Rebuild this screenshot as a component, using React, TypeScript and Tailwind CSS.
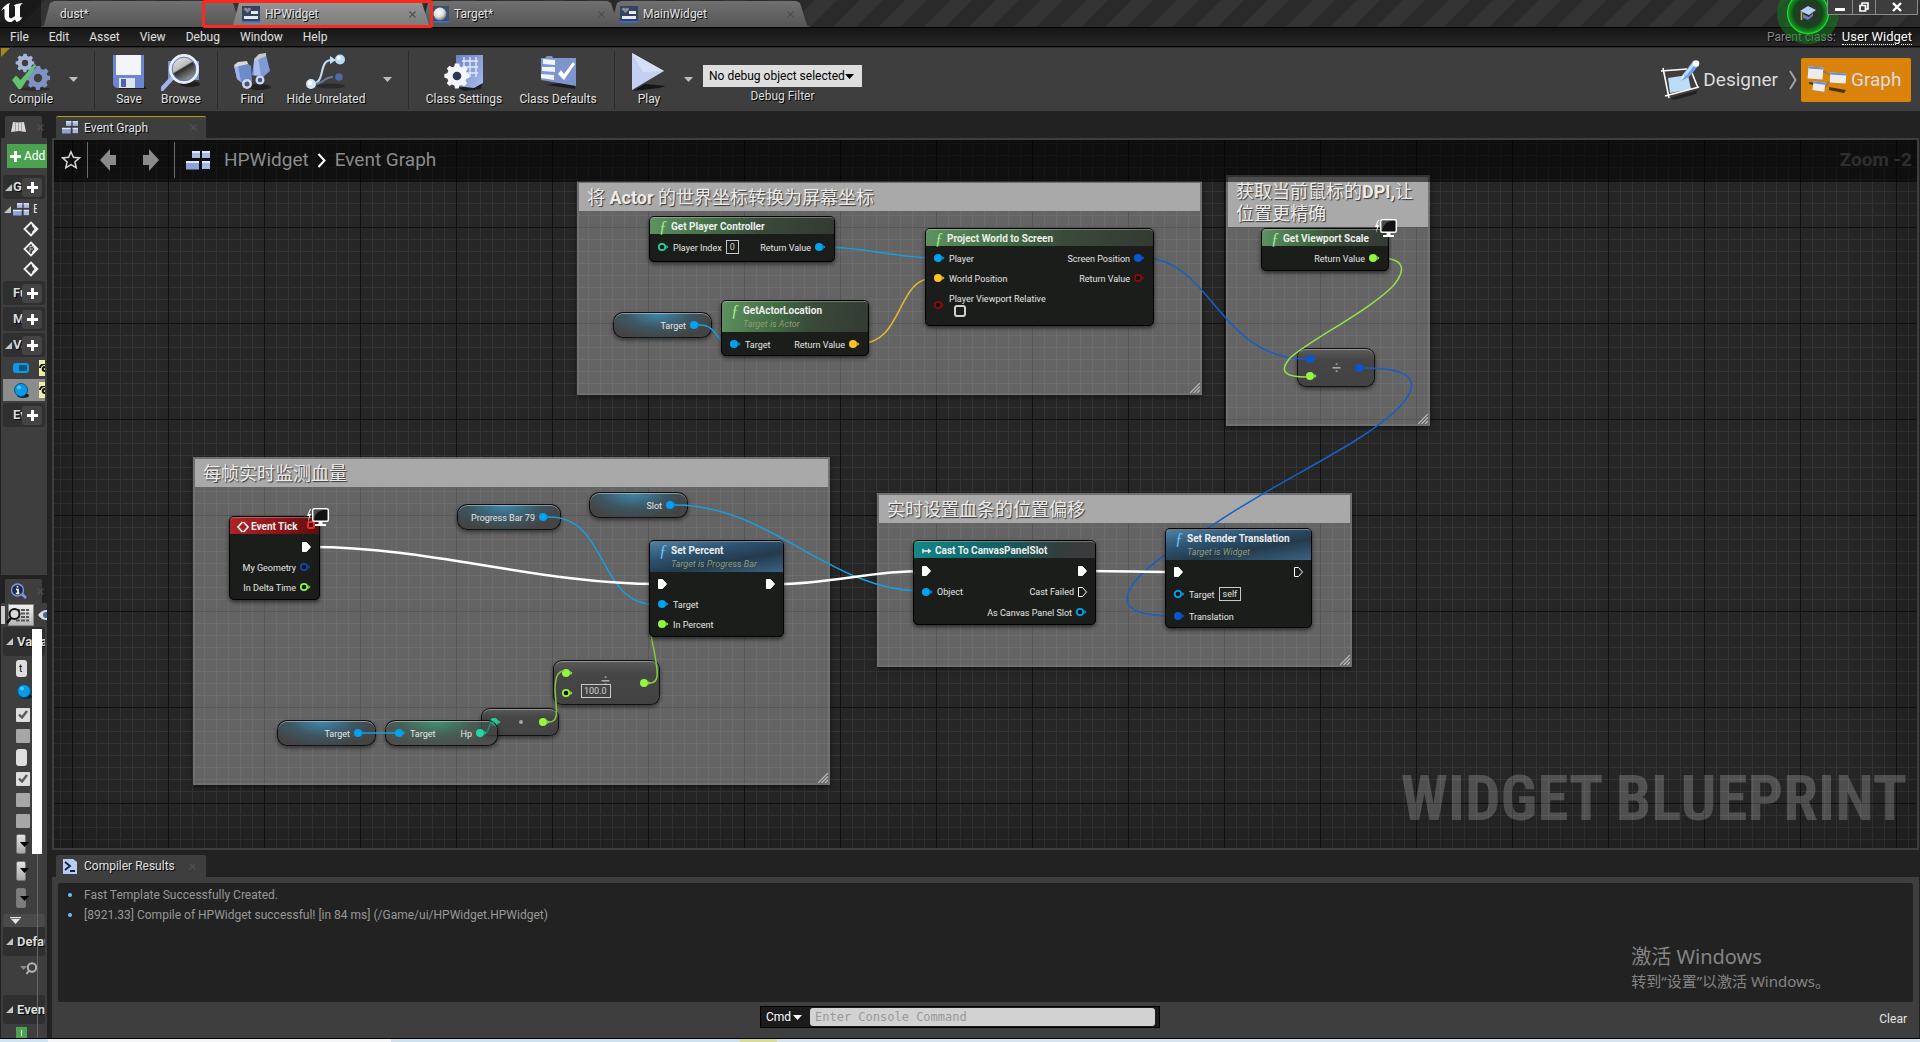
import React from "react";

const shadow = "[text-shadow:1px_1px_0_#000000]";

/* ---------- small drawings ---------- */

function Caret({ className = "" }: { className?: string }) {
  return (
    <svg width="9" height="5" viewBox="0 0 9 5" className={className} aria-hidden="true">
      <path d="M0 0H9L4.5 5Z" fill="currentColor" />
    </svg>
  );
}

function CloseX() {
  return (
    <svg width="7" height="7" viewBox="0 0 7 7" aria-hidden="true">
      <path d="M.5 .5 6.5 6.5M6.5 .5 .5 6.5" stroke="#505050" strokeWidth="1.1" />
    </svg>
  );
}

function Triangle() {
  return (
    <svg width="7" height="7" viewBox="0 0 7 7" className="shrink-0" aria-hidden="true">
      <path d="M7 0V7H0Z" fill="#c4c4c4" />
    </svg>
  );
}

function WidgetIcon() {
  return (
    <svg width="18" height="17" viewBox="0 0 18 17" aria-hidden="true">
      <rect width="18" height="15" fill="#34435f" />
      <rect y="15" width="18" height="1.5" fill="#2f6fe0" />
      <path d="M5.5 7 1.8 3.6C1.6 1.6 4.6 1 5.5 3 6.400 1 9.400 1.600 9 3.600Z" fill="#8d8d8d" />
      <rect x="9" y="5" width="7" height="3" fill="#e8e8e8" />
      <rect x="2" y="10" width="14" height="3" fill="#e8e8e8" />
    </svg>
  );
}

function SphereIcon() {
  return (
    <svg width="18" height="17" viewBox="0 0 18 17" aria-hidden="true">
      <defs>
        <radialGradient id="sphere" cx=".4" cy=".35" r=".65">
          <stop offset="0" stopColor="#ffffff" />
          <stop offset=".6" stopColor="#dcdcdc" />
          <stop offset="1" stopColor="#777777" />
        </radialGradient>
      </defs>
      <rect width="18" height="15" fill="#3d4f6e" />
      <rect y="15" width="18" height="1.500" fill="#2f6fe0" />
      <circle cx="9" cy="8" r="6.500" fill="url(#sphere)" />
    </svg>
  );
}

function GraphIcon({ w = 16, h = 13 }: { w?: number; h?: number }) {
  return (
    <svg width={w} height={h} viewBox="0 0 24 19" className="shrink-0" aria-hidden="true">
      <g fill="#a9b8e6">
        <rect x="6" y="0" width="8" height="7" />
        <rect x="16" y="0" width="8" height="7" />
        <rect x="0" y="10" width="13" height="8.500" fill="#8fa1da" />
        <rect x="16" y="10" width="8" height="8" />
      </g>
      <g fill="#dfe6fb">
        <rect x="6" y="0" width="8" height="2" />
        <rect x="16" y="0" width="8" height="2" />
        <rect x="0" y="10" width="13" height="2" />
        <rect x="16" y="10" width="8" height="2" />
      </g>
    </svg>
  );
}

const gearPath =
  "M-2-10H2L2.700-7.200 5-6.200 7.400-7.700 10-5 8.300-2.600 9-.8 11.500-.3V3.200L8.900 3.800 7.900 6 9.300 8.300 6.600 10.900 4.300 9.500 2.200 10.300 1.600 13H-1.800L-2.500 10.300-4.700 9.400-7 10.800-9.500 8.300-8.100 5.900-9 3.800-11.700 3.200V-.4L-9-1.100-8-3.200-9.400-5.500-6.900-8-4.600-6.500-2.500-7.300Z";

function Gear({ x, y, s, fill, hole }: { x: number; y: number; s: number; fill: string; hole: string }) {
  return (
    <g transform={`translate(${x} ${y}) scale(${s}) translate(0 -1.500)`}>
      <path d={gearPath} fill={fill} />
      <circle cx="0" cy="1.500" r="4" fill={hole} />
    </g>
  );
}

function CompileIcon() {
  return (
    <svg width="40" height="38" viewBox="0 0 40 38" aria-hidden="true">
      <ellipse cx="24" cy="36" rx="15" ry="1.800" fill="#222" opacity=".7" />
      <Gear x={14} y={10} s={0.8} fill="#a6b5da" hole="#3e3e3e" />
      <Gear x={27} y={25} s={1.05} fill="#8092c2" hole="#3e3e3e" />
      <path d="M1 27 5 22.500 9.500 27 24 10.500 25 13 10 36 7.500 36Z" fill="#62c370" />
    </svg>
  );
}

function SaveIcon() {
  return (
    <svg width="36" height="36" viewBox="0 0 36 36" aria-hidden="true">
      <path d="M6 32H33L36 35H8Z" fill="#1c1c1c" />
      <path d="M2 1H33V34H5L2 31Z" fill="#6c86cf" />
      <rect x="5" y="1" width="25" height="20" fill="#f4f5fa" />
      <rect x="8" y="24" width="16" height="10" fill="#dfe3ee" />
      <rect x="10" y="25" width="5" height="8" fill="#4a64ad" />
    </svg>
  );
}

function BrowseIcon() {
  return (
    <svg width="40" height="38" viewBox="0 0 40 38" aria-hidden="true">
      <defs>
        <linearGradient id="lens" x1="0" y1="0" x2=".6" y2="1">
          <stop offset="0" stopColor="#f5f5f5" />
          <stop offset=".5" stopColor="#bdbdbd" />
          <stop offset=".56" stopColor="#2d2d2d" />
          <stop offset="1" stopColor="#a0a0a0" />
        </linearGradient>
      </defs>
      <ellipse cx="29" cy="31" rx="10" ry="3" fill="#1d1d1d" />
      <path d="M7 8H38V27H7Z" fill="#7990cf" />
      <path d="M1 36 13 23" stroke="#9db3ea" strokeWidth="4.500" strokeLinecap="round" />
      <circle cx="23" cy="16" r="13.500" fill="url(#lens)" stroke="#e9eefb" strokeWidth="3" />
      <circle cx="23" cy="16" r="11.800" fill="none" stroke="#5f78b9" strokeWidth="1" />
    </svg>
  );
}

function FindIcon() {
  return (
    <svg width="40" height="38" viewBox="0 0 40 38" aria-hidden="true">
      <ellipse cx="27" cy="34" rx="12" ry="3" fill="#222" />
      <path d="M2 13 15 10 19 13 20 28 12 32 5 26Z" fill="#6f8acb" />
      <path d="M22 7 34 2 38 18 30 25 20 22Z" fill="#7f9ad8" />
      <path d="M22 7 26 4 29 22 22 22Z" fill="#a9bdea" />
      <path d="M2 13 6 12 9 29 5 26Z" fill="#9cb2e6" />
      <path d="M2 12 6 9 15 8 16 11 3 14Z" fill="#d8d8d8" />
      <path d="M22 6 27 1 34 0 34 3 23 8Z" fill="#c9c9c9" />
      <circle cx="15" cy="31" r="5" fill="#cfd6e8" />
      <circle cx="15" cy="31" r="2.500" fill="#45557f" />
      <circle cx="28" cy="27" r="4.500" fill="#cfd6e8" />
      <circle cx="28" cy="27" r="2.200" fill="#45557f" />
    </svg>
  );
}

function HideIcon() {
  return (
    <svg width="42" height="38" viewBox="0 0 42 38" aria-hidden="true">
      <ellipse cx="26" cy="33" rx="14" ry="2.500" fill="#2a2a2a" />
      <path d="M6 31C22 31 12 7 27 7" fill="none" stroke="#bfe0f7" strokeWidth="2" />
      <path d="M25 3 31 7 25 11Z" fill="#bfe0f7" />
      <path d="M8 31C20 31 18 24 28 24" fill="none" stroke="#65799b" strokeWidth="2" />
      <circle cx="35" cy="6.500" r="5" fill="#b9dcf8" />
      <circle cx="34" cy="5" r="2" fill="#fff" />
      <circle cx="34" cy="24" r="3.800" fill="#4c6aa8" />
      <circle cx="6" cy="31" r="5" fill="#cfe7fb" />
      <circle cx="5" cy="30" r="2.200" fill="#fff" />
    </svg>
  );
}

function SettingsIcon() {
  return (
    <svg width="40" height="38" viewBox="0 0 40 38" aria-hidden="true">
      <defs>
        <linearGradient id="doc" x1="0" y1="0" x2="1" y2="1">
          <stop offset="0" stopColor="#6d83c4" />
          <stop offset="1" stopColor="#a9bbec" />
        </linearGradient>
      </defs>
      <path d="M14 35 38 30 37 36 20 38Z" fill="#1d1d1d" />
      <path d="M12 2H39V30L30 35 12 33Z" fill="url(#doc)" />
      <path d="M18 8H34M18 14H34M20 4V18M26 4V24M32 4V24M22 20H34" stroke="#e4ebfc" strokeWidth="1.300" />
      <Gear x={13} y={23} s={1.08} fill="#f3f5fb" hole="#2b3850" />
    </svg>
  );
}

function DefaultsIcon() {
  return (
    <svg width="40" height="38" viewBox="0 0 40 38" aria-hidden="true">
      <path d="M8 32 38 28 37 36Z" fill="#1d1d1d" />
      <path d="M3 5H7L9 3H14L15 5H38V33L3 27Z" fill="#7e95cd" />
      <path d="M5 6 17 7V12L5 11ZM4 14 17 14V19L4 18ZM3 21 16 22V27L3 25Z" fill="#f2f4fa" />
      <path d="M20 21 23 17 26 21 35 9 37 11 26 27Z" fill="#fff" />
    </svg>
  );
}

function PlayIcon() {
  return (
    <svg width="36" height="40" viewBox="0 0 36 40" aria-hidden="true">
      <path d="M2 39 14 32 35 34 28 36Z" fill="#151515" />
      <path d="M1 1 33 19 1 38Z" fill="#c3d0f1" />
      <path d="M1 1 33 19 12 20Z" fill="#d5dff6" />
    </svg>
  );
}

function DesignerIcon() {
  return (
    <svg width="40" height="40" viewBox="0 0 40 40" aria-hidden="true">
      <path d="M10 38 38 30 36 34 14 40Z" fill="#222" />
      <path d="M8 18 28 15 31 29 10 33Z" fill="#bcdcf6" />
      <path d="M1 11 27 9M3 8 9 38M5 36 39 27M32 13 38 28" stroke="#fff" strokeWidth="1.600" fill="none" />
      <path d="M21 21 23 14 33 1 39 5 29 17Z" fill="#6fa2e6" />
      <path d="M21 21 23 14 25 16Z" fill="#fff" />
      <path d="M24 14 34 1.500 36 3 26 16Z" fill="#c5def9" />
      <circle cx="36" cy="3.500" r="3.300" fill="#fff" />
    </svg>
  );
}

function GraphModeIcon() {
  return (
    <svg width="40" height="28" viewBox="0 0 40 28" aria-hidden="true">
      <path d="M22 21 39 24 37 27 22 24ZM2 16 8 17 7 19 2 18Z" fill="#4a2f08" />
      <path d="M16 5 23 9M18 21 24 14" stroke="#777" strokeWidth="1.200" />
      <g transform="rotate(4 8 7)">
        <rect x="1" y="1" width="15" height="12" fill="#ececec" />
        <rect x="1" y="1" width="15" height="2" fill="#5f8fe0" />
      </g>
      <g transform="rotate(4 31 12)">
        <rect x="23" y="7" width="16" height="10" fill="#ececec" />
        <rect x="23" y="7" width="16" height="2" fill="#5f8fe0" />
      </g>
      <g transform="rotate(8 12 20)">
        <rect x="6" y="16" width="12" height="9" fill="#ececec" />
        <rect x="6" y="16" width="12" height="2" fill="#5f8fe0" />
      </g>
    </svg>
  );
}

function EyePatch() {
  return (
    <span className="flex h-4 w-[6px] shrink-0 items-center overflow-hidden bg-[#eeeea8]">
      <svg width="6" height="8" viewBox="0 0 6 8" aria-hidden="true">
        <path d="M6 0C3 0 1 2 1 4M6 3C3 3 3 7 6 7" stroke="#111" strokeWidth="2" fill="none" />
      </svg>
    </span>
  );
}

/* ---------- graph parts ---------- */

const BLUE = "#00a2f2";
const DEEP = "#0a56cf";
const LIME = "#93f73f";
const TEAL = "#1fd8a4";
const YELLOW = "#fdc324";
const RED = "#8c0a0a";

function Pin({ color, open = false }: { color: string; open?: boolean }) {
  return (
    <svg width="14" height="10" viewBox="0 0 14 10" className="shrink-0" aria-hidden="true">
      <circle cx="5" cy="5" r={open ? 3.2 : 4} fill={open ? "#111" : color} stroke={open ? color : "none"} strokeWidth="1.700" />
      <path d="M9.300 3 11.500 5 9.300 7Z" fill={color} />
    </svg>
  );
}

function Exec({ open = false, out = false }: { open?: boolean; out?: boolean }) {
  return (
    <svg width={out ? 12 : 14} height="12" viewBox={out ? "0 0 12 12" : "0 0 14 12"} className="shrink-0" aria-hidden="true">
      <path d="M1.500 1.500H5.500L9.500 6 5.500 10.500H1.500Z" fill={open ? "none" : "#fff"} stroke="#fff" strokeWidth="1" strokeLinejoin="round" />
    </svg>
  );
}

const label = "whitespace-nowrap pt-px text-[9px] leading-[12px] text-[#e6e6e6]";

function In({ pin, children }: { pin: React.ReactNode; children?: React.ReactNode }) {
  return (
    <div className="flex items-center gap-[2px]">
      {pin}
      <span className={label}>{children}</span>
    </div>
  );
}

function Out({ pin, children }: { pin: React.ReactNode; children?: React.ReactNode }) {
  return (
    <div className="ml-auto flex items-center gap-[3px]">
      <span className={label}>{children}</span>
      {pin}
    </div>
  );
}

function Row({ children, className = "h-5" }: { children: React.ReactNode; className?: string }) {
  return <div className={`flex items-center pl-[7px] pr-[6px] ${className}`}>{children}</div>;
}

const tints = {
  green: "bg-[linear-gradient(100deg,#5f9160_0%,#3f6a42_38%,#3a4a3a_60%,#333a33_100%)]",
  blue: "bg-[linear-gradient(170deg,#4f7fa3_0%,#2c5270_35%,#243a4c_62%,#3a6384_100%)]",
  teal: "bg-[linear-gradient(100deg,#15878a_0%,#126164_45%,#333c3c_80%,#3c3c3c_100%)]",
  red: "bg-[linear-gradient(100deg,#b02428_0%,#8c1518_55%,#591012_100%)]",
};

function Node({
  place,
  tint,
  icon,
  title,
  sub,
  corner,
  children,
}: {
  place: string;
  tint: keyof typeof tints;
  icon: React.ReactNode;
  title: string;
  sub?: string;
  corner?: React.ReactNode;
  children: React.ReactNode;
}) {
  return (
    <article className={`absolute rounded-[5px] border border-black bg-[#1b1d1b] shadow-[0_2px_4px_rgba(0,0,0,0.6)] ${place}`}>
      <header className={`flex gap-[3px] rounded-t-[4px] border-t border-white/30 pl-[8px] pt-px ${tints[tint]} ${sub ? "h-[31px]" : "h-[17px]"}`}>
        <span className="flex h-4 w-[10px] shrink-0 items-center justify-center">{icon}</span>
        <div>
          <h3 className="whitespace-nowrap text-[10px] font-bold leading-4 text-[#eeeeee]">{title}</h3>
          {sub && <p className="whitespace-nowrap text-[9px] italic leading-[11px] text-[#8f9a72]">{sub}</p>}
        </div>
      </header>
      {children}
      {corner}
    </article>
  );
}

function Fn({ className = "text-[#9ff08f]" }: { className?: string }) {
  return <i className={`font-['Liberation_Serif',serif] text-[16px] leading-none ${className}`}>ƒ</i>;
}

function Pill({
  place,
  glow = "bg-[radial-gradient(ellipse_at_45%_0%,#3f88ad_0%,#3d5560_45%,#444_75%)]",
  children,
}: {
  place: string;
  glow?: string;
  children: React.ReactNode;
}) {
  return (
    <div className={`absolute flex items-center rounded-[10px] border border-black/80 pl-[8px] pr-[8px] shadow-[inset_0_1px_0_rgba(255,255,255,0.4),0_2px_4px_rgba(0,0,0,0.5)] ${glow} ${place}`}>
      {children}
    </div>
  );
}

function Compact({ place, children }: { place: string; children: React.ReactNode }) {
  return (
    <div className={`absolute flex items-center rounded-[9px] border border-black/80 bg-[linear-gradient(#5a5a5a,#464646_30%,#424242)] pl-[7px] pr-[6px] shadow-[inset_0_1px_0_rgba(255,255,255,0.35),0_2px_4px_rgba(0,0,0,0.5)] ${place}`}>
      {children}
    </div>
  );
}

function Monitor({ place }: { place: string }) {
  return (
    <svg width="24" height="20" viewBox="0 0 24 20" className={`absolute ${place}`} aria-hidden="true">
      <path d="M4 2 1 9H3L2 15 5 7H3L5 2Z" fill="#fff" />
      <rect x="6.800" y="1.800" width="15.500" height="12.500" rx="1.500" fill="#111" stroke="#fff" strokeWidth="1.500" />
      <path d="M8 13C9 7 12 4 17 3H8Z" fill="#4a4a4a" />
      <path d="M12.500 15H16.500V17H20V19H9V17H12.500Z" fill="#fff" />
    </svg>
  );
}

function Comment({ place, head, children }: { place: string; head: string; children: React.ReactNode }) {
  return (
    <section className={`absolute border-2 border-[#7a7a7a]/50 bg-[#c3c3c3]/40 shadow-[0_2px_5px_rgba(0,0,0,0.5)] ${place}`}>
      <h2 className={`bg-[#a9a9a9] pl-[8px] text-[18px] font-normal leading-[22px] text-[#ececec] [text-shadow:1px_1px_1px_#333] ${head}`}>
        {children}
      </h2>
      <svg width="10" height="10" viewBox="0 0 10 10" className="absolute bottom-0 right-0" aria-hidden="true">
        <path d="M0 10 10 0M3.500 10 10 3.500M7 10 10 7" stroke="#bbb" strokeWidth="1.200" />
      </svg>
    </section>
  );
}

function Wires() {
  return (
    <svg className="pointer-events-none absolute inset-0 h-full w-full" aria-hidden="true">
      <g transform="translate(-54 -140)" fill="none" strokeWidth="1.500">
        <g stroke="#159fe0">
          <path d="M826 247C860 247 900 258 934 258" />
          <path d="M700 325C718 325 716 344 730 344" />
          <path d="M549 517C610 517 595 605 658 605" />
          <path d="M676 505C770 505 830 591 922 591" />
          <path d="M364 733H396" />
        </g>
        <g stroke="#1560c8">
          <path d="M1144 258C1210 258 1220 359 1306 359" />
          <path d="M1365 368C1410 368 1421 380 1404 402C1370 442 1280 478 1210 527C1160 555 1127 580 1127 600C1128 613 1150 616 1174 616" />
        </g>
        <path d="M858 344C905 344 895 278 934 278" stroke="#e9b828" />
        <path d="M1379 258C1403 258 1408 268 1393 286C1370 310 1310 340 1290 358C1278 372 1286 377 1306 377" stroke="#93e34a" />
        <g stroke="#84c93f">
          <path d="M650 683C661 683 657 668 654 650C650 634 650 626 658 625" />
          <path d="M549 722C560 722 556 708 555 690C555 678 558 671 564 671" />
        </g>
        <path d="M486 733C490 730 488 722 494 722" stroke="#1c8f70" />
        <g stroke="#ffffff" strokeWidth="2.500">
          <path d="M312 547C430 547 540 584 658 584" />
          <path d="M777 584C830 584 870 571 922 571" />
          <path d="M1089 571C1120 571 1145 572 1174 572" />
        </g>
      </g>
    </svg>
  );
}

function Canvas() {
  return (
    <main className="relative min-h-0 flex-1 overflow-hidden border-2 border-[#3e3e3e] bg-[#262626]">
      <div className="absolute inset-0 bg-[linear-gradient(90deg,#111_1px,transparent_1px),linear-gradient(#111_1px,transparent_1px),linear-gradient(90deg,#343434_1px,transparent_1px),linear-gradient(#343434_1px,transparent_1px)] bg-[size:96px_96px,96px_96px,12px_12px,12px_12px] bg-[position:18px_87px,18px_87px,6px_3px,6px_3px]" />
      <div className="absolute inset-0 shadow-[inset_0_0_60px_rgba(0,0,0,0.35)]" />
      <p className="absolute bottom-[17px] right-[10px] whitespace-nowrap font-['Roboto_Condensed',Roboto,sans-serif] text-[63px] font-bold leading-[64px] text-white/20">
        WIDGET BLUEPRINT
      </p>

      <Comment place="left-[523px] top-[41px] h-[214px] w-[625px]" head="h-7 pt-[4px]">
        将 <b>Actor</b> 的世界坐标转换为屏幕坐标
      </Comment>
      <Comment place="left-[1172px] top-[35px] h-[251px] w-[204px]" head="h-[50px] pt-[4px]">
        获取当前鼠标的<b>DPI,</b>让
        <br />
        位置更精确
      </Comment>
      <Comment place="left-[139px] top-[317px] h-[328px] w-[637px]" head="h-7 pt-[4px]">
        每帧实时监测血量
      </Comment>
      <Comment place="left-[823px] top-[353px] h-[174px] w-[475px]" head="h-7 pt-[4px]">
        实时设置血条的位置偏移
      </Comment>

      <Pill place="left-[559px] top-[172px] h-[26px] w-[99px]">
        <Out pin={<Pin color={BLUE} />}>Target</Out>
      </Pill>
      <Pill place="left-[403px] top-[364px] h-[26px] w-[104px]">
        <Out pin={<Pin color={BLUE} />}>Progress Bar 79</Out>
      </Pill>
      <Pill place="left-[535px] top-[352px] h-[26px] w-[99px]">
        <Out pin={<Pin color={BLUE} />}>Slot</Out>
      </Pill>
      <Pill place="left-[223px] top-[580px] h-[26px] w-[99px]">
        <Out pin={<Pin color={BLUE} />}>Target</Out>
      </Pill>
      <Compact place="left-[427px] top-[568px] h-[28px] w-[78px] justify-between">
        <Pin color={TEAL} />
        <span className="h-1 w-1 rounded-full bg-[#a5a5a5]" />
        <Pin color={LIME} />
      </Compact>
      <Pill
        place="left-[331px] top-[580px] h-[26px] w-[113px]"
        glow="bg-[radial-gradient(ellipse_at_45%_0%,rgba(62,150,115,0.9)_0%,rgba(64,90,80,0.8)_45%,rgba(68,68,68,0.7)_75%)]"
      >
        <In pin={<Pin color={BLUE} />}>Target</In>
        <Out pin={<Pin color={TEAL} />}>Hp</Out>
      </Pill>
      <Compact place="left-[1243px] top-[208px] h-[39px] w-[78px] justify-between">
        <div className="flex flex-col gap-[7px]">
          <Pin color={DEEP} />
          <Pin color={LIME} />
        </div>
        <span className="text-[16px] leading-4 text-[#a9a9a9]">÷</span>
        <Pin color={DEEP} />
      </Compact>
      <Compact place="left-[499px] top-[520px] h-[45px] w-[107px]">
        <div className="flex flex-col gap-[10px]">
          <Pin color={LIME} />
          <Pin color={LIME} open />
        </div>
        <div className="relative ml-[6px] flex h-full w-[54px] items-end pb-[6px]">
          <span className="absolute left-[20px] top-[12px] text-[16px] leading-4 text-[#a9a9a9]">÷</span>
          <input
            aria-label="Divisor"
            defaultValue="100.0"
            className="relative h-[14px] w-[30px] border border-[#c9c9c9] bg-transparent px-[2px] text-[9px] leading-none text-[#d0d0d0]"
          />
        </div>
        <span className="ml-auto">
          <Pin color={LIME} />
        </span>
      </Compact>

      <Wires />

      <Node place="left-[595px] top-[76px] h-[46px] w-[186px]" tint="green" icon={<Fn />} title="Get Player Controller">
        <Row className="h-[26px]">
          <In pin={<Pin color={TEAL} open />}>Player Index</In>
          <input
            aria-label="Player Index"
            defaultValue="0"
            className="ml-[4px] h-[14px] w-[13px] border border-[#c9c9c9] bg-transparent px-[3px] text-[9px] leading-none text-[#d0d0d0]"
          />
          <Out pin={<Pin color={BLUE} />}>Return Value</Out>
        </Row>
      </Node>
      <Node place="left-[871px] top-[88px] h-[98px] w-[229px]" tint="green" icon={<Fn />} title="Project World to Screen">
        <div className="pt-[2px]">
          <Row>
            <In pin={<Pin color={BLUE} />}>Player</In>
            <Out pin={<Pin color={DEEP} />}>Screen Position</Out>
          </Row>
          <Row>
            <In pin={<Pin color={YELLOW} />}>World Position</In>
            <Out pin={<Pin color={RED} open />}>Return Value</Out>
          </Row>
          <label className="flex items-center gap-[2px] pl-[7px] pt-[4px]">
            <Pin color={RED} open />
            <span className={label}>
              Player Viewport Relative
              <input type="checkbox" className="ml-[5px] block h-3 w-3 appearance-none rounded-[3px] border-2 border-[#d0d0d0]" />
            </span>
          </label>
        </div>
      </Node>
      <Node place="left-[667px] top-[160px] h-[56px] w-[148px]" tint="green" icon={<Fn />} title="GetActorLocation" sub="Target is Actor">
        <Row className="h-[24px]">
          <In pin={<Pin color={BLUE} />}>Target</In>
          <Out pin={<Pin color={YELLOW} />}>Return Value</Out>
        </Row>
      </Node>
      <Node
        place="left-[1207px] top-[88px] h-[43px] w-[128px]"
        tint="green"
        icon={<Fn />}
        title="Get Viewport Scale"
        corner={<Monitor place="-top-[11px] -right-[10px]" />}
      >
        <Row className="h-[24px]">
          <Out pin={<Pin color={LIME} />}>Return Value</Out>
        </Row>
      </Node>
      <Node
        place="left-[175px] top-[376px] h-[84px] w-[91px]"
        tint="red"
        icon={
          <svg width="12" height="12" viewBox="0 0 12 12" className="shrink-0" aria-hidden="true">
            <path d="M5.500 1 1 6 5.500 11M6.500 1 11 6 6.500 11" fill="none" stroke="#eee" strokeWidth="1.700" />
          </svg>
        }
        title="Event Tick"
        corner={
          <>
            <span className="absolute right-[4px] top-[4px] h-[8px] w-[8px] rounded-[2px] border-2 border-[#f02a2a] bg-[#3a0606]" />
            <Monitor place="-top-[10px] -right-[11px]" />
          </>
        }
      >
        <div className="pt-[3px]">
          <Row>
            <Out pin={<Exec out />} />
          </Row>
          <Row>
            <Out pin={<Pin color="#0b4bb0" open />}>My Geometry</Out>
          </Row>
          <Row>
            <Out pin={<Pin color={LIME} open />}>In Delta Time</Out>
          </Row>
        </div>
      </Node>
      <Node place="left-[595px] top-[400px] h-[97px] w-[135px]" tint="blue" icon={<Fn className="text-[#6cc3ff]" />} title="Set Percent" sub="Target is Progress Bar">
        <div className="pt-[2px]">
          <Row>
            <In pin={<Exec />} />
            <Out pin={<Exec out />} />
          </Row>
          <Row>
            <In pin={<Pin color={BLUE} />}>Target</In>
          </Row>
          <Row>
            <In pin={<Pin color={LIME} />}>In Percent</In>
          </Row>
        </div>
      </Node>
      <Node
        place="left-[859px] top-[400px] h-[85px] w-[183px]"
        tint="teal"
        icon={
          <svg width="11" height="8" viewBox="0 0 11 8" aria-hidden="true">
            <path d="M1 1.500V6.500M1 4H8" stroke="#eee" strokeWidth="1.500" />
            <path d="M6.500 1 10.500 4 6.500 7Z" fill="#eee" />
          </svg>
        }
        title="Cast To CanvasPanelSlot"
      >
        <div className="pt-[3px]">
          <Row>
            <In pin={<Exec />} />
            <Out pin={<Exec out />} />
          </Row>
          <Row className="h-[21px]">
            <In pin={<Pin color={BLUE} />}>Object</In>
            <Out pin={<Exec open out />}>Cast Failed</Out>
          </Row>
          <Row>
            <Out pin={<Pin color={BLUE} open />}>As Canvas Panel Slot</Out>
          </Row>
        </div>
      </Node>
      <Node place="left-[1111px] top-[388px] h-[100px] w-[147px]" tint="blue" icon={<Fn className="text-[#6cc3ff]" />} title="Set Render Translation" sub="Target is Widget">
        <Row className="h-[23px]">
          <In pin={<Exec />} />
          <Out pin={<Exec open out />} />
        </Row>
        <Row className="h-[22px]">
          <In pin={<Pin color={BLUE} open />}>Target</In>
          <button className="ml-[4px] h-[14px] border border-[#c9c9c9] px-[3px] text-[9px] leading-[12px] text-[#e0e0e0]">self</button>
        </Row>
        <Row className="h-[22px]">
          <In pin={<Pin color={DEEP} />}>Translation</In>
        </Row>
      </Node>

      <nav className="absolute inset-x-0 top-0 flex h-[42px] items-center bg-black/55 pb-[2px]" aria-label="Breadcrumb">
        <button aria-label="Bookmark" className="ml-[7px]">
          <svg width="20" height="20" viewBox="0 0 20 20" aria-hidden="true">
            <path d="M10 1.800 12.400 7.300 18.400 7.900 13.900 11.900 15.200 17.800 10 14.700 4.800 17.800 6.100 11.900 1.600 7.900 7.600 7.300Z" fill="none" stroke="#d8d8d8" strokeWidth="1.500" />
          </svg>
        </button>
        <span className="ml-[6px] h-9 w-px bg-[#6b6b6b]" />
        <button aria-label="Back" className="ml-3">
          <svg width="17" height="22" viewBox="0 0 17 22" aria-hidden="true">
            <path d="M0 11 10 0V6H16V16H10V22Z" fill="#8b8b8b" />
          </svg>
        </button>
        <button aria-label="Forward" className="ml-[25px]">
          <svg width="17" height="22" viewBox="0 0 17 22" aria-hidden="true">
            <path d="M17 11 7 0V6H1V16H7V22Z" fill="#8b8b8b" />
          </svg>
        </button>
        <span className="ml-[15px] h-9 w-px bg-[#6b6b6b]" />
        <span className="ml-[11px]">
          <GraphIcon w={24} h={19} />
        </span>
        <a href="#widget" className="ml-[14px] text-[19px] leading-6 text-[#8c8c8c]">
          HPWidget
        </a>
        <svg width="9" height="15" viewBox="0 0 9 15" className="ml-2" aria-hidden="true">
          <path d="M1.500 1 7.500 7.500 1.500 14" fill="none" stroke="#fff" strokeWidth="2" />
        </svg>
        <a href="#event-graph" className="ml-[9px] text-[19px] leading-6 text-[#8c8c8c]">
          Event Graph
        </a>
        <span className="ml-auto mr-[5px] text-[19px] font-bold leading-6 text-[#2f2f2f]">Zoom -2</span>
      </nav>
    </main>
  );
}

/* ---------- window chrome ---------- */

function WindowTab({ title, icon, active = false, closable = true }: { title: string; icon?: React.ReactNode; active?: boolean; closable?: boolean }) {
  return (
    <div
      className={`-mr-[13px] flex h-[26px] w-[202px] items-center [clip-path:polygon(0_100%,3px_92%,9px_8%,13px_0,188px_0,192px_8%,199px_92%,202px_100%)] ${
        active ? "relative z-10 bg-[linear-gradient(#969696,#7a7a7a)]" : "bg-[linear-gradient(#707070,#565656)]"
      } ${icon ? "pl-3" : "pl-[19px]"}`}
    >
      {icon}
      <span className={`text-[12px] leading-4 text-[#e3e3e3] ${shadow} ${icon ? "ml-[5px]" : ""}`}>{title}</span>
      {closable && (
        <button aria-label={`Close ${title}`} className="ml-auto mr-[16px]">
          <CloseX />
        </button>
      )}
    </div>
  );
}

function TitleBar() {
  return (
    <header className="relative flex h-7 items-end border-b border-black bg-[repeating-linear-gradient(135deg,#333_0px,#333_16px,#2a2a2a_16px,#2a2a2a_32px)]">
      <div className="flex h-full w-[41px] items-start bg-black/40 pl-[1px] pt-[2px]">
        <svg width="23" height="21" viewBox="0 0 23 21" aria-hidden="true">
          <path
            d="M0 9C2 5 5 2 9 1L8 3.500V14C8 16 9.500 16.500 11 16L14 14V5C14 4 13.500 3.500 12.500 3.500 14 2.500 17 1.500 22 1 20 2.500 19 3.500 19 5V14C19 15.500 20 16 21.500 15 20 18 18 19.500 15.500 20L14 17.500 10.500 20C6 20 3.500 18 3.500 14V7.500C3.500 6.500 2 6.500 0 9Z"
            fill="#fff"
          />
        </svg>
      </div>
      <WindowTab title="dust*" closable={false} />
      <WindowTab title="HPWidget" icon={<WidgetIcon />} active />
      <WindowTab title="Target*" icon={<SphereIcon />} />
      <WindowTab title="MainWidget" icon={<WidgetIcon />} />
      <div className="pointer-events-none absolute left-[202px] top-0 z-20 h-7 w-[231px] rounded-[3px] border-[3px] border-[#fb2a1c]" />
      <svg width="64" height="45" viewBox="0 0 64 45" className="pointer-events-none absolute right-[80px] top-0 z-20" aria-hidden="true">
        <defs>
          <radialGradient id="ring" cx=".5" cy=".5" r=".5">
            <stop offset=".3" stopColor="#2b332b" />
            <stop offset=".7" stopColor="#15461a" />
            <stop offset="1" stopColor="#12a522" />
          </radialGradient>
        </defs>
        <circle cx="32" cy="13" r="31" fill="#14821e" opacity=".5" />
        <circle cx="32" cy="13" r="20.500" fill="url(#ring)" stroke="#1fd832" strokeWidth="1.200" />
        <path d="M24 11 32 6 40 10 33 15Z" fill="#b4cdf0" />
        <path d="M27 14 33 17 37 13V16L32 20 27 18Z" fill="#5f7fb5" />
        <path d="M25.500 12V20" stroke="#d8b070" strokeWidth="1.500" />
      </svg>
      <div className="relative z-30 ml-auto mr-[2px] flex h-[15px] self-start border border-t-0 border-[#8a8a8a] bg-[#3d3d3d]">
        <button aria-label="Minimize" className="flex w-[25px] items-center justify-center border-r border-[#8a8a8a]">
          <span className="mt-[4px] h-[3px] w-[10px] bg-white" />
        </button>
        <button aria-label="Restore" className="flex w-[23px] items-center justify-center border-r border-[#8a8a8a]">
          <svg width="10" height="10" viewBox="0 0 10 10" aria-hidden="true">
            <path d="M3 3V1H9V7H7M1 3.500H6.500V9H1Z" fill="none" stroke="#fff" strokeWidth="1.700" />
          </svg>
        </button>
        <button aria-label="Close" className="flex w-[41px] items-center justify-center">
          <svg width="10" height="10" viewBox="0 0 10 10" aria-hidden="true">
            <path d="M1 1 9 9M9 1 1 9" stroke="#fff" strokeWidth="2.400" />
          </svg>
        </button>
      </div>
    </header>
  );
}

function MenuBar() {
  return (
    <nav className={`flex h-[19px] items-center border-b border-black bg-[linear-gradient(#161616,#262626)] pl-[10px] text-[12px] leading-4 text-[#e0e0e0] ${shadow}`}>
      <div className="flex gap-[20px]">
        {["File", "Edit", "Asset", "View", "Debug", "Window", "Help"].map((m) => (
          <button key={m}>{m}</button>
        ))}
      </div>
      <span className="ml-auto mr-[6px] text-[12px] text-[#8a8a8a]">Parent class:</span>
      <a href="#user-widget" className="relative z-30 mr-2 border-b border-dotted border-white text-[13px] leading-[15px] text-white">
        User Widget
      </a>
    </nav>
  );
}

function Tool({ label: text, icon, width }: { label: string; icon: React.ReactNode; width: string }) {
  return (
    <button className={`flex h-full flex-col items-center pt-1 ${width}`}>
      <span className="flex h-[39px] items-center">{icon}</span>
      <span className={`whitespace-nowrap text-[12px] leading-4 text-[#e3e3e3] ${shadow}`}>{text}</span>
    </button>
  );
}

function DropArrow({ label: text }: { label: string }) {
  return (
    <button aria-label={text} className="flex h-full w-[22px] items-center justify-center text-[#bdbdbd]">
      <Caret />
    </button>
  );
}

function Sep({ className = "" }: { className?: string }) {
  return <span className={`h-[58px] w-px self-center bg-[#2b2b2b] ${className}`} />;
}

function Toolbar() {
  return (
    <div className="flex h-16 items-stretch border-t border-[#2a2a2a] bg-[#3e3e3e]">
      <div className="relative flex">
        <svg width="9" height="9" viewBox="0 0 9 9" className="absolute left-px top-0" aria-hidden="true">
          <path d="M0 0H9L0 9Z" fill="#a8841e" />
        </svg>
        <Tool label="Compile" icon={<CompileIcon />} width="w-[62px]" />
        <DropArrow label="Compile options" />
      </div>
      <Sep className="ml-[10px] mr-[11px]" />
      <Tool label="Save" icon={<SaveIcon />} width="w-[46px]" />
      <Tool label="Browse" icon={<BrowseIcon />} width="ml-[5px] w-[48px]" />
      <Sep className="ml-3 mr-[10px]" />
      <Tool label="Find" icon={<FindIcon />} width="w-[48px]" />
      <Tool label="Hide Unrelated" icon={<HideIcon />} width="ml-[4px] w-[92px]" />
      <span className="ml-[4px]">
        <DropArrow label="Hide Unrelated options" />
      </span>
      <Sep className="ml-[10px] mr-[9px]" />
      <Tool label="Class Settings" icon={<SettingsIcon />} width="w-[92px]" />
      <Tool label="Class Defaults" icon={<DefaultsIcon />} width="ml-[2px] w-[92px]" />
      <Sep className="ml-[10px] mr-[7px]" />
      <Tool label="Play" icon={<PlayIcon />} width="w-[54px]" />
      <span className="ml-px">
        <DropArrow label="Play options" />
      </span>
      <label className="ml-[4px] flex flex-col items-center gap-px pt-[17px] text-[12px] leading-4 text-[#dcdcdc]">
        <span className="relative block">
          <select className="block h-[22px] w-[159px] appearance-none bg-[#dedede] pl-[6px] text-[12px] text-black" defaultValue="none">
            <option value="none">No debug object selected</option>
          </select>
          <Caret className="pointer-events-none absolute right-2 top-[9px] text-black" />
        </span>
        <span className={shadow}>Debug Filter</span>
      </label>
      <div className="ml-auto mr-[9px] flex items-center self-center text-[19px] leading-6 text-[#dcdcdc]">
        <button className="flex items-center gap-[3px]">
          <DesignerIcon />
          Designer
        </button>
        <svg width="8" height="20" viewBox="0 0 8 20" className="mx-[11px] mr-[4px]" aria-hidden="true">
          <path d="M1 1 6.500 10 1 19" fill="none" stroke="#a8a8a8" strokeWidth="1.800" />
        </svg>
        <button className="flex h-11 w-[110px] items-center gap-1 rounded-[2px] bg-[#d9820c] pl-[6px]">
          <GraphModeIcon />
          Graph
        </button>
      </div>
    </div>
  );
}

/* ---------- left column ---------- */

const barBg = "bg-[#2f2f2f] rounded-[3px]";

function Section({ title, open = false, className = "" }: { title: string; open?: boolean; className?: string }) {
  return (
    <div className={`flex items-center overflow-hidden ${barBg} ${className}`}>
      <span className="flex w-[10px] shrink-0 justify-center">{open && <Triangle />}</span>
      <span className={`w-[9px] shrink-0 overflow-hidden whitespace-nowrap text-[13px] font-bold leading-5 text-[#dadada] ${shadow}`}>{title}</span>
      <button aria-label={`Add ${title}`} className="flex h-[19px] w-5 shrink-0 items-center justify-center rounded-[3px] bg-[#444]">
        <svg width="11" height="11" viewBox="0 0 11 11" aria-hidden="true">
          <path d="M5.500 0V11M0 5.500H11" stroke="#fff" strokeWidth="3" />
        </svg>
      </button>
    </div>
  );
}

function Diamond({ f = false }: { f?: boolean }) {
  return (
    <div className="flex h-5 items-center pl-[20px]">
      <svg width="16" height="16" viewBox="0 0 16 16" aria-hidden="true">
        <path d="M8 1.500 14.500 8 8 14.500 1.500 8Z" fill="none" stroke="#f0f0f0" strokeWidth="1.800" />
        <path d="M9 2.500 14 8 9 13.500V11L11.500 8 9 5Z" fill="#f0f0f0" />
        {f && <path d="M7 5V11M7 5.500H11M7 8H10" stroke="#aaa" strokeWidth="1.200" />}
      </svg>
    </div>
  );
}

function Ball() {
  return (
    <svg width="15" height="15" viewBox="0 0 15 15" className="shrink-0" aria-hidden="true">
      <ellipse cx="9" cy="12.500" rx="6" ry="2.500" fill="#0a2233" />
      <circle cx="7" cy="7" r="6.500" fill="#079be8" stroke="#06517a" strokeWidth="1" />
      <circle cx="5" cy="4.500" r="2" fill="#4cc3ff" />
    </svg>
  );
}

function BlueprintPanel() {
  return (
    <section aria-label="My Blueprint" className="flex w-[47px] flex-col overflow-hidden pl-px">
      <div className="ml-1 flex h-[22px] w-[37px] shrink-0 items-center justify-between rounded-t-[2px] bg-[#3e3e3e] pl-[6px]">
        <svg width="15" height="13" viewBox="0 0 15 13" aria-hidden="true">
          <path d="M2 1 7 1.500 13 1 15 11 8 10 0 11Z" fill="#d9d9d9" />
          <path d="M4.500 1.200V10M7.500 1.500V10M10.500 1.200V10" stroke="#a2a2a2" />
        </svg>
        <span className="-mr-[2px]">
          <CloseX />
        </span>
      </div>
      <div className="h-[437px] w-[46px] overflow-hidden bg-[#3e3e3e] pl-[2px] pt-[6px]">
        <button className="ml-[4px] flex h-6 w-[40px] items-center gap-[3px] overflow-hidden bg-[#4ba350] pl-[3px] text-[12px] leading-4 text-white">
          <svg width="11" height="11" viewBox="0 0 11 11" className="shrink-0" aria-hidden="true">
            <path d="M5.500 0V11M0 5.500H11" stroke="#fff" strokeWidth="3" />
          </svg>
          Add
        </button>
        <Section title="Graphs" open className="mt-[7px] h-6 w-[42px]" />
        <div className="flex h-5 items-center gap-[2px] overflow-hidden pl-[1px] text-[12px] text-[#ddd]">
          <Triangle />
          <GraphIcon />
          <span className="ml-[2px] w-[4px] overflow-hidden">E</span>
        </div>
        <Diamond />
        <Diamond f />
        <Diamond />
        <Section title="Functions" className="mt-[2px] h-6 w-[42px]" />
        <Section title="Macros" className="mt-[2px] h-6 w-[42px]" />
        <Section title="Variables" open className="mt-[2px] h-6 w-[42px]" />
        <div className="flex h-[22px] w-[42px] items-center justify-between pl-[10px]">
          <span className="h-[10px] w-4 rounded-[3px] border-2 border-l-[6px] border-[#0d98e0] bg-[#0b5580]" />
          <EyePatch />
        </div>
        <div className="flex h-[22px] w-[42px] items-center justify-between bg-[#8c8c8c] pl-[11px]">
          <Ball />
          <EyePatch />
        </div>
        <Section title="Event" className="mt-[2px] h-6 w-[42px]" />
      </div>
    </section>
  );
}

function Check({ on = false, name }: { on?: boolean; name: string }) {
  return (
    <label className="relative flex h-[21px] items-center pl-[15px]">
      <input aria-label={name} type="checkbox" defaultChecked={on} className="h-[14px] w-[14px] appearance-none rounded-[1px] bg-[#a6a6a6] checked:bg-[#dedede]" />
      {on && (
        <svg width="10" height="9" viewBox="0 0 10 9" className="absolute left-[17px] top-[6px]" aria-hidden="true">
          <path d="M1 4.500 4 7.500 9 1" fill="none" stroke="#5a5a5a" strokeWidth="2.400" />
        </svg>
      )}
    </label>
  );
}

function Combo({ tone, className, name }: { tone: string; className: string; name: string }) {
  return (
    <div className={`flex items-center ${className}`}>
      <button aria-label={name} className={`flex h-5 w-[10px] items-center rounded-[2px] border border-[#777] pl-[3px] ${tone}`}>
        <Caret className="shrink-0 text-black" />
      </button>
    </div>
  );
}

function DetailsPanel() {
  return (
    <section aria-label="Details" className="mt-[4px] flex min-h-0 w-[47px] flex-1 flex-col overflow-hidden pl-px">
      <div className="ml-1 flex h-[24px] w-[37px] shrink-0 items-center justify-between rounded-t-[2px] bg-[#3e3e3e] pl-[5px]">
        <svg width="17" height="16" viewBox="0 0 17 16" aria-hidden="true">
          <path d="M11 10 16 15" stroke="#7f9be8" strokeWidth="2.500" />
          <circle cx="7.500" cy="7" r="6" fill="#1e2a48" stroke="#7f9be8" strokeWidth="1.300" />
          <path d="M7.500 3V4.600M6 6.500H8V10.500M5.700 10.500H9.500" stroke="#fff" strokeWidth="1.700" />
        </svg>
        <span className="-mr-[2px]">
          <CloseX />
        </span>
      </div>
      <div className="relative min-h-0 w-[46px] flex-1 overflow-hidden bg-[#3e3e3e]">
        <div className="flex h-[24px] items-center">
          <span className="h-[18px] w-1 bg-[#ccc]" />
          <button aria-label="Property matrix" className="relative ml-[3px] flex h-[22px] w-[26px] items-center border border-[#888] bg-[linear-gradient(#f0f0f0,#b5b5b5)]">
            <svg width="28" height="18" viewBox="0 0 28 18" className="absolute -left-[3px]" aria-hidden="true">
              <path d="M10 4H23M10 7.500H23M10 11H23M10 14.500H23" stroke="#555" strokeWidth="1.800" strokeDasharray="4 1" />
              <circle cx="8.500" cy="8" r="5" fill="#d8d8d8" stroke="#111" strokeWidth="2" />
              <path d="M5 12 1 17" stroke="#111" strokeWidth="2.500" />
            </svg>
          </button>
          <svg width="9" height="12" viewBox="0 0 9 12" className="ml-[4px]" aria-hidden="true">
            <path d="M9 1C5 1 2 3 0 6 2 9 5 11 9 11Z" fill="#dcdcdc" />
            <circle cx="8" cy="6" r="3" fill="#46629c" />
          </svg>
        </div>
        <h4 className={`ml-[2px] flex h-[29px] w-[42px] items-center gap-[4px] overflow-hidden pl-[3px] text-[13px] font-bold text-[#dcdcdc] ${barBg} ${shadow}`}>
          <Triangle />
          Variable
        </h4>
        <div className="flex h-[24px] items-center pl-[15px]">
          <input aria-label="Variable name" defaultValue="t" className="h-[17px] w-[11px] rounded-[3px] bg-[#dedede] px-[3px] text-[10px] text-black" />
        </div>
        <div className="flex h-[22px] items-center pl-[16px]">
          <Ball />
        </div>
        <div className="h-[2px]" />
        <Check on name="Instance editable" />
        <Check name="Blueprint read only" />
        <div className="flex h-[22px] items-center pl-[15px]">
          <input aria-label="Tooltip" className="h-[17px] w-[11px] rounded-[3px] bg-[#dedede]" />
        </div>
        <Check on name="Expose on spawn" />
        <Check name="Private" />
        <Check name="Expose to cinematics" />
        <Combo name="Category" tone="bg-[linear-gradient(#e2e2e2,#a8a8a8)]" className="h-[26px] pl-[15px]" />
        <Combo name="Replication" tone="bg-[linear-gradient(#e2e2e2,#a8a8a8)]" className="h-[27px] pl-[15px]" />
        <Combo name="Replication condition" tone="bg-[#7d7d7d]" className="h-[28px] pl-[15px]" />
        <button aria-label="Show advanced" className="ml-[2px] mt-[2px] flex h-[13px] w-[42px] items-center rounded-[2px] bg-[#4a4a4a] pl-[7px]">
          <svg width="11" height="7" viewBox="0 0 11 7" aria-hidden="true">
            <path d="M0 0H11V1.200H0ZM1 2H10L5.500 7Z" fill="#e5e5e5" />
          </svg>
        </button>
        <h4 className={`ml-[2px] flex h-[29px] w-[42px] items-center gap-[4px] overflow-hidden pl-[3px] text-[13px] font-bold text-[#dcdcdc] ${barBg} ${shadow}`}>
          <Triangle />
          Default
        </h4>
        <div className="flex h-[39px] items-start pl-[19px] pt-[6px]">
          <svg width="18" height="13" viewBox="0 0 18 13" aria-hidden="true">
            <path d="M0 4H7L3.500 8Z" fill="#8a8a8a" />
            <circle cx="12" cy="5.500" r="4.200" fill="none" stroke="#b5b5b5" strokeWidth="2" />
            <path d="M9 8.500 6.500 12" stroke="#b5b5b5" strokeWidth="2" />
          </svg>
        </div>
        <h4 className={`ml-[2px] flex h-[29px] w-[42px] items-center gap-[4px] overflow-hidden pl-[3px] text-[13px] font-bold text-[#dcdcdc] ${barBg} ${shadow}`}>
          <Triangle />
          Events
        </h4>
        <button aria-label="Add event" className="ml-[15px] mt-[3px] flex h-3 w-[11px] items-center justify-center bg-[#4ba350]">
          <span className="h-[6px] w-px bg-white" />
        </button>
        <div className="absolute bottom-0 left-[36px] top-[250px] w-px bg-[#666]" />
        <div className="absolute left-[31px] top-[26px] h-[225px] w-[10px] bg-white" />
      </div>
    </section>
  );
}

/* ---------- bottom panel ---------- */

function CompilerResults() {
  return (
    <section aria-label="Compiler Results" className="flex flex-col">
      <div className="ml-1 flex h-[22px] w-[150px] items-center rounded-t-[2px] bg-[#3e3e3e] pl-[7px] pr-[10px]">
        <svg width="14" height="17" viewBox="0 0 14 17" aria-hidden="true">
          <path d="M0 1H10L14 4V16H0Z" fill="#b9cdf3" />
          <path d="M2 4 7 8 2 12M7 13H12" fill="none" stroke="#14203c" strokeWidth="1.800" />
        </svg>
        <span className={`ml-[7px] text-[12px] leading-4 text-[#e3e3e3] ${shadow}`}>Compiler Results</span>
        <button aria-label="Close Compiler Results" className="ml-auto">
          <CloseX />
        </button>
      </div>
      <div className="relative flex flex-col bg-[#3e3e3e] px-[6px] pt-[6px]">
        <ul className="h-[119px] rounded-[2px] bg-[#222] pt-[2px] text-[12px] leading-5 text-[#989898]">
          {["Fast Template Successfully Created.", "[8921.33] Compile of HPWidget successful! [in 84 ms] (/Game/ui/HPWidget.HPWidget)"].map((t) => (
            <li key={t} className="flex items-center pl-[10px]">
              <span className="mr-[12px] h-1 w-1 rounded-full bg-[#6cc0f5]" />
              {t}
            </li>
          ))}
        </ul>
        <div className="absolute right-[89px] top-[66px] font-['Noto_Sans','Noto_Sans_CJK_SC',sans-serif] text-[#858585]">
          <p className="text-[20px] leading-7">激活 Windows</p>
          <p className="text-[15px] leading-5">转到“设置”以激活 Windows。</p>
        </div>
        <div className="-ml-[51px] grid h-9 grid-cols-[1fr_auto_1fr] items-start">
          <span />
          <div className="mt-[4px] flex h-[22px] w-[400px] items-center border border-black bg-[#1b1b1b]">
            <button className="flex h-5 items-center gap-[2px] pl-[5px] text-[12px] text-white">
              Cmd
              <Caret />
            </button>
            <input
              aria-label="Console command"
              placeholder="Enter Console Command"
              className="ml-auto mr-1 h-[18px] w-[345px] rounded-[3px] bg-[#d2d2d2] px-[5px] font-['DejaVu_Sans_Mono',monospace] text-[12px] placeholder:text-[#9a9a9a]"
            />
          </div>
          <button className="mt-[9px] justify-self-end pr-[6px] text-[12px] leading-4 text-[#e6e6e6]">Clear</button>
        </div>
      </div>
    </section>
  );
}

export default function App() {
  return (
    <div className="flex h-screen flex-col overflow-hidden bg-[#222] font-[Roboto,'Noto_Sans_CJK_SC',sans-serif] text-[12px]">
      <TitleBar />
      <MenuBar />
      <Toolbar />
      <div className="flex min-h-0 flex-1 pt-[5px]">
        <div className="flex flex-col">
          <BlueprintPanel />
          <DetailsPanel />
        </div>
        <div className="ml-[5px] mr-px flex min-h-0 min-w-0 flex-1 flex-col">
          <div className="ml-1 flex h-[22px] w-[150px] shrink-0 items-center rounded-t-[2px] border-t border-[#b39c14] bg-[#3e3e3e] pl-[6px] pr-[9px]">
            <GraphIcon />
            <span className={`ml-[6px] text-[12px] leading-4 text-[#e3e3e3] ${shadow}`}>Event Graph</span>
            <button aria-label="Close Event Graph" className="ml-auto">
              <CloseX />
            </button>
          </div>
          <Canvas />
          <div className="h-[5px] shrink-0" />
          <CompilerResults />
        </div>
      </div>
      <div className="flex h-1 shrink-0 border-t border-black">
        <span className="w-12 bg-[#cfe5f3]" />
        <span className="w-[343px] bg-[#f4f6f8]" />
        <span className="w-[349px] bg-[#cfe0ee]" />
        <span className="w-[37px] bg-[#d8dc9a]" />
        <span className="flex-1 bg-[#d6e4ef]" />
      </div>
    </div>
  );
}
